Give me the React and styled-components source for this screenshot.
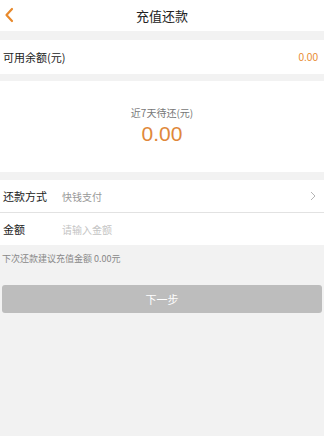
import React from "react";
import styled, { createGlobalStyle } from "styled-components";

const GlobalStyle = createGlobalStyle`
  html, body {
    margin: 0;
    padding: 0;
    background: #f2f2f2;
    font-family: "Noto Sans CJK SC", "Liberation Sans", sans-serif;
  }
`;

const App = () => {
  return (
    <Page>
      <GlobalStyle />
      <Header>
        <BackBtn>
          <svg width="10" height="16" viewBox="0 0 10 16">
            <path d="M8 2 L2.5 8 L8 14" fill="none" stroke="#e8892b" strokeWidth="2.2" strokeLinecap="round" strokeLinejoin="round" />
          </svg>
        </BackBtn>
        <Title>充值还款</Title>
      </Header>

      <BalanceRow>
        <RowLabel>可用余额(元)</RowLabel>
        <BalanceValue>0.00</BalanceValue>
      </BalanceRow>

      <DueBox>
        <DueLabel>近7天待还(元)</DueLabel>
        <DueAmount>0.00</DueAmount>
      </DueBox>

      <FormGroup>
        <FormRow $divider>
          <FieldLabel>还款方式</FieldLabel>
          <FieldValue>快钱支付</FieldValue>
          <svg width="6" height="10" viewBox="0 0 6 10">
            <path d="M1 1 L5 5 L1 9" fill="none" stroke="#b5b5b5" strokeWidth="1" />
          </svg>
        </FormRow>
        <FormRow>
          <FieldLabel>金额</FieldLabel>
          <FieldValue $placeholder>请输入金额</FieldValue>
        </FormRow>
      </FormGroup>

      <Hint>下次还款建议充值金额 0.00元</Hint>

      <NextBtn>下一步</NextBtn>
    </Page>
  );
};

const Page = styled.div`
  width: 324px;
  min-height: 436px;
  background: #f2f2f2;
`;

const Header = styled.div`
  height: 31px;
  background: #fff;
  display: flex;
  align-items: center;
  justify-content: center;
  position: relative;
`;

const BackBtn = styled.div`
  position: absolute;
  left: 4px;
  top: 7px;
  display: flex;
`;

const Title = styled.div`
  font-size: 13px;
  color: #222;
`;

const BalanceRow = styled.div`
  margin-top: 9px;
  height: 34px;
  background: #fff;
  display: flex;
  align-items: center;
  justify-content: space-between;
  padding: 0 6px 0 3px;
`;

const RowLabel = styled.div`
  font-size: 11px;
  color: #222;
`;

const BalanceValue = styled.div`
  font-size: 10px;
  color: #e8892b;
  font-family: "Liberation Sans", sans-serif;
`;

const DueBox = styled.div`
  margin-top: 7px;
  height: 91px;
  background: #fff;
  display: flex;
  flex-direction: column;
  align-items: center;
  padding-top: 25px;
  box-sizing: border-box;
`;

const DueLabel = styled.div`
  font-size: 10px;
  color: #777;
  line-height: 14px;
`;

const DueAmount = styled.div`
  font-size: 21px;
  color: #e0883a;
  font-family: "Liberation Sans", sans-serif;
  line-height: 24px;
  margin-top: 2px;
`;

const FormGroup = styled.div`
  margin-top: 8px;
  background: #fff;
`;

const FormRow = styled.div`
  height: 32px;
  display: flex;
  align-items: center;
  padding: 0 8px 0 3px;
  border-bottom: ${(p) => (p.$divider ? "1px solid #e2e2e2" : "none")};
`;

const FieldLabel = styled.div`
  width: 59px;
  font-size: 11px;
  color: #222;
`;

const FieldValue = styled.div`
  flex: 1;
  font-size: 10px;
  color: ${(p) => (p.$placeholder ? "#c4c4c4" : "#999")};
`;

const Hint = styled.div`
  font-size: 9px;
  color: #888;
  padding: 8px 2px 0;
  line-height: 12px;
`;

const NextBtn = styled.div`
  margin: 20px 2px 0;
  height: 28px;
  border-radius: 3px;
  background: #bdbdbd;
  color: #fff;
  font-size: 11px;
  display: flex;
  align-items: center;
  justify-content: center;
`;

export default App;
